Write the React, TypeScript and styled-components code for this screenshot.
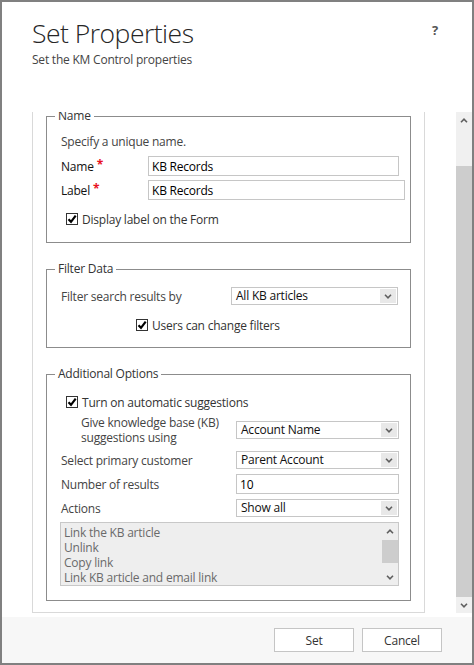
import styled, { createGlobalStyle } from "styled-components";

const GlobalStyle = createGlobalStyle`
  html, body {
    margin: 0;
    padding: 0;
    background: #ffffff;
  }
  body {
    font-family: "Open Sans", "Noto Sans", sans-serif;
    font-size: 12px;
    letter-spacing: -0.22px;
    color: #333333;
  }
  * {
    box-sizing: border-box;
  }
`;

const Chevron = ({ dir }: { dir: "up" | "down" }) => (
  <svg width="8" height="5" viewBox="0 0 8 5">
    <polyline
      points={dir === "up" ? "1,4.2 4,1.2 7,4.2" : "1,0.8 4,3.8 7,0.8"}
      fill="none"
      stroke="#5f5f5f"
      strokeWidth="1.6"
    />
  </svg>
);

const Check = ({ label, indent, first }: { label: string; indent: number; first?: boolean }) => (
  <CheckRow $indent={indent} $mt={first ? 10 : 9}>
    <CheckBox>
      <svg width="10" height="10" viewBox="0 0 10 10">
        <path d="M1.5 5.2 L4 7.8 L8.7 1.6" fill="none" stroke="#000" strokeWidth="2.2" />
      </svg>
    </CheckBox>
    {label}
  </CheckRow>
);

const Dropdown = ({ value, width }: { value: string; width: number }) => (
  <SelectBox $width={width}>
    <SelectValue>{value}</SelectValue>
    <ArrowBox>
      <Chevron dir="down" />
    </ArrowBox>
  </SelectBox>
);

export default function App() {
  return (
    <>
      <GlobalStyle />
      <Window>
        <Header>
          <div>
            <Title>Set Properties</Title>
            <Subtitle>Set the KM Control properties</Subtitle>
          </div>
          <HelpMark>?</HelpMark>
        </Header>

        <Body>
          <Viewport>
            <Panel>
              <Group $pb={13}>
                <GroupTitle>Name</GroupTitle>
                <Hint>Specify a unique name.</Hint>
                <FieldRow $mt={4}>
                  <FieldLabel $width={87} $strong>
                    Name<Required>*</Required>
                  </FieldLabel>
                  <TextBox $width={251} readOnly value="KB Records" />
                </FieldRow>
                <FieldRow $mt={4}>
                  <FieldLabel $width={87} $strong>
                    Label<Required>*</Required>
                  </FieldLabel>
                  <TextBox $width={257} readOnly value="KB Records" />
                </FieldRow>
                <Check label="Display label on the Form" indent={5} />
              </Group>

              <Group $pb={12}>
                <GroupTitle>Filter Data</GroupTitle>
                <FieldRow $mt={9}>
                  <FieldLabel $width={170}>Filter search results by</FieldLabel>
                  <Dropdown value="All KB articles" width={167} />
                </FieldRow>
                <Check label="Users can change filters" indent={75} />
              </Group>

              <Group $pb={14}>
                <GroupTitle>Additional Options</GroupTitle>
                <Check label="Turn on automatic suggestions" indent={5} first />
                <FieldRow $mt={3} $h={30}>
                  <FieldLabel $width={175} $indent={20}>
                    Give knowledge base (KB)
                    <br />
                    suggestions using
                  </FieldLabel>
                  <Dropdown value="Account Name" width={163} />
                </FieldRow>
                <FieldRow $mt={5}>
                  <FieldLabel $width={175}>Select primary customer</FieldLabel>
                  <Dropdown value="Parent Account" width={163} />
                </FieldRow>
                <FieldRow $mt={4}>
                  <FieldLabel $width={175}>Number of results</FieldLabel>
                  <TextBox $width={163} readOnly value="10" />
                </FieldRow>
                <FieldRow $mt={4}>
                  <FieldLabel $width={175}>Actions</FieldLabel>
                  <Dropdown value="Show all" width={163} />
                </FieldRow>
                <ListBox>
                  <ListItems>
                    <ListItem>Link the KB article</ListItem>
                    <ListItem>Unlink</ListItem>
                    <ListItem>Copy link</ListItem>
                    <ListItem>Link KB article and email link</ListItem>
                  </ListItems>
                  <MiniScroll>
                    <ArrowCell>
                      <Chevron dir="up" />
                    </ArrowCell>
                    <MiniThumb />
                    <ArrowCell $end>
                      <Chevron dir="down" />
                    </ArrowCell>
                  </MiniScroll>
                </ListBox>
              </Group>
            </Panel>
          </Viewport>

          <Scrollbar>
            <ArrowCell>
              <Chevron dir="up" />
            </ArrowCell>
            <Track>
              <Thumb />
            </Track>
            <ArrowCell>
              <Chevron dir="down" />
            </ArrowCell>
          </Scrollbar>
        </Body>

        <Footer>
          <Button>Set</Button>
          <Button>Cancel</Button>
        </Footer>
      </Window>
    </>
  );
}

const Window = styled.div`
  width: 474px;
  height: 665px;
  border: 2px solid #808080;
  background: #ffffff;
  display: flex;
  flex-direction: column;
  overflow: hidden;
`;

const Header = styled.div`
  height: 110px;
  flex-shrink: 0;
  padding: 15px 34px 0 30px;
  display: flex;
  justify-content: space-between;
  align-items: flex-start;
`;

const Title = styled.h1`
  margin: 0;
  font-family: "Open Sans", "Noto Sans", sans-serif;
  font-weight: 300;
  font-size: 26.5px;
  letter-spacing: -0.5px;
  line-height: 32px;
  color: #262626;
`;

const Subtitle = styled.div`
  margin-top: 3px;
  font-size: 12px;
  line-height: 16px;
  color: #444444;
`;

const HelpMark = styled.div`
  margin-top: 5px;
  font-size: 13px;
  font-weight: 700;
  line-height: 16px;
  color: #555555;
`;

const Body = styled.div`
  height: 501px;
  flex-shrink: 0;
  display: flex;
  justify-content: space-between;
  padding-left: 30px;
`;

const Viewport = styled.div`
  width: 393px;
  height: 100%;
  overflow: hidden;
`;

/* content of the scroll area, scrolled a little so its top edge is out of view */
const Panel = styled.div`
  margin-top: -13px;
  border: 1px solid #d9d9d9;
  padding: 8px 13px 11px;
  display: flex;
  flex-direction: column;
  gap: 18px;
`;

const Group = styled.fieldset<{ $pb: number }>`
  margin: 0;
  min-width: 0;
  border: 1px solid #8c8c8c;
  padding: 0 11px ${(p) => p.$pb}px 14px;
  display: flex;
  flex-direction: column;
`;

const GroupTitle = styled.legend`
  margin-left: -6px;
  padding: 0 3px;
  font-size: 12px;
  line-height: 16px;
  color: #333333;
`;

const Hint = styled.div`
  margin-top: 8px;
  line-height: 20px;
  color: #444444;
`;

const FieldRow = styled.div<{ $mt: number; $h?: number }>`
  margin-top: ${(p) => p.$mt}px;
  height: ${(p) => p.$h ?? 20}px;
  display: flex;
  align-items: center;
`;

const FieldLabel = styled.div<{ $width: number; $indent?: number; $strong?: boolean }>`
  width: ${(p) => p.$width}px;
  flex-shrink: 0;
  padding-left: ${(p) => p.$indent ?? 0}px;
  line-height: 15px;
  color: ${(p) => (p.$strong ? "#111111" : "#444444")};
`;

const Required = styled.span`
  margin-left: 3px;
  color: #e81123;
  font-weight: 700;
  position: relative;
  top: -2px;
`;

const TextBox = styled.input<{ $width: number }>`
  width: ${(p) => p.$width}px;
  flex-shrink: 0;
  height: 20px;
  margin: 0;
  border: 1px solid #c6c6c6;
  padding: 0 3px;
  font-family: inherit;
  font-size: 12px;
  letter-spacing: -0.22px;
  color: #000000;
  background: #ffffff;
  outline: none;
`;

const SelectBox = styled.div<{ $width: number }>`
  width: ${(p) => p.$width}px;
  flex-shrink: 0;
  height: 18px;
  border: 1px solid #c6c6c6;
  background: #ffffff;
  display: flex;
  align-items: stretch;
`;

const SelectValue = styled.div`
  flex: 1;
  padding-left: 4px;
  line-height: 16px;
  color: #111111;
`;

const ArrowBox = styled.div`
  width: 16px;
  margin: 1px 1px 1px 0;
  background: #e8e8e8;
  display: flex;
  align-items: center;
  justify-content: center;
`;

const CheckRow = styled.div<{ $indent: number; $mt: number }>`
  margin-top: ${(p) => p.$mt}px;
  height: 20px;
  padding-left: ${(p) => p.$indent}px;
  display: flex;
  align-items: center;
  gap: 4px;
  color: #333333;
`;

const CheckBox = styled.span`
  width: 12px;
  height: 12px;
  border: 1px solid #333333;
  background: #ffffff;
  display: flex;
  align-items: center;
  justify-content: center;
`;

const ListBox = styled.div`
  margin: 4px 0 0 -1px;
  width: 339px;
  height: 64px;
  border: 1px solid #c8c8c8;
  background: #eeeeee;
  display: flex;
`;

const ListItems = styled.div`
  flex: 1;
  padding: 2px 0 0 3px;
`;

const ListItem = styled.div`
  line-height: 15px;
  color: #6a6a6a;
`;

const MiniScroll = styled.div`
  width: 16px;
  display: flex;
  flex-direction: column;
`;

const ArrowCell = styled.div<{ $end?: boolean }>`
  height: 16px;
  flex-shrink: 0;
  margin-top: ${(p) => (p.$end ? "auto" : "0")};
  display: flex;
  align-items: center;
  justify-content: center;
`;

const MiniThumb = styled.div`
  height: 23px;
  margin-top: 1px;
  background: #cdcdcd;
`;

const Scrollbar = styled.div`
  width: 16px;
  background: #f0f0f0;
  display: flex;
  flex-direction: column;
`;

const Track = styled.div`
  flex: 1;
  padding-top: 38px;
  display: flex;
`;

const Thumb = styled.div`
  flex: 1;
  background: #cdcdcd;
`;

const Footer = styled.div`
  margin-top: 4px;
  flex: 1;
  background: #f7f7f7;
  display: flex;
  justify-content: flex-end;
  align-items: flex-start;
  gap: 8px;
  padding: 11px 30px 0 0;
`;

const Button = styled.button`
  width: 80px;
  height: 24px;
  border: 1px solid #c5c5c5;
  background: #ffffff;
  font-family: inherit;
  font-size: 12px;
  letter-spacing: -0.22px;
  color: #333333;
  padding: 0;
`;
